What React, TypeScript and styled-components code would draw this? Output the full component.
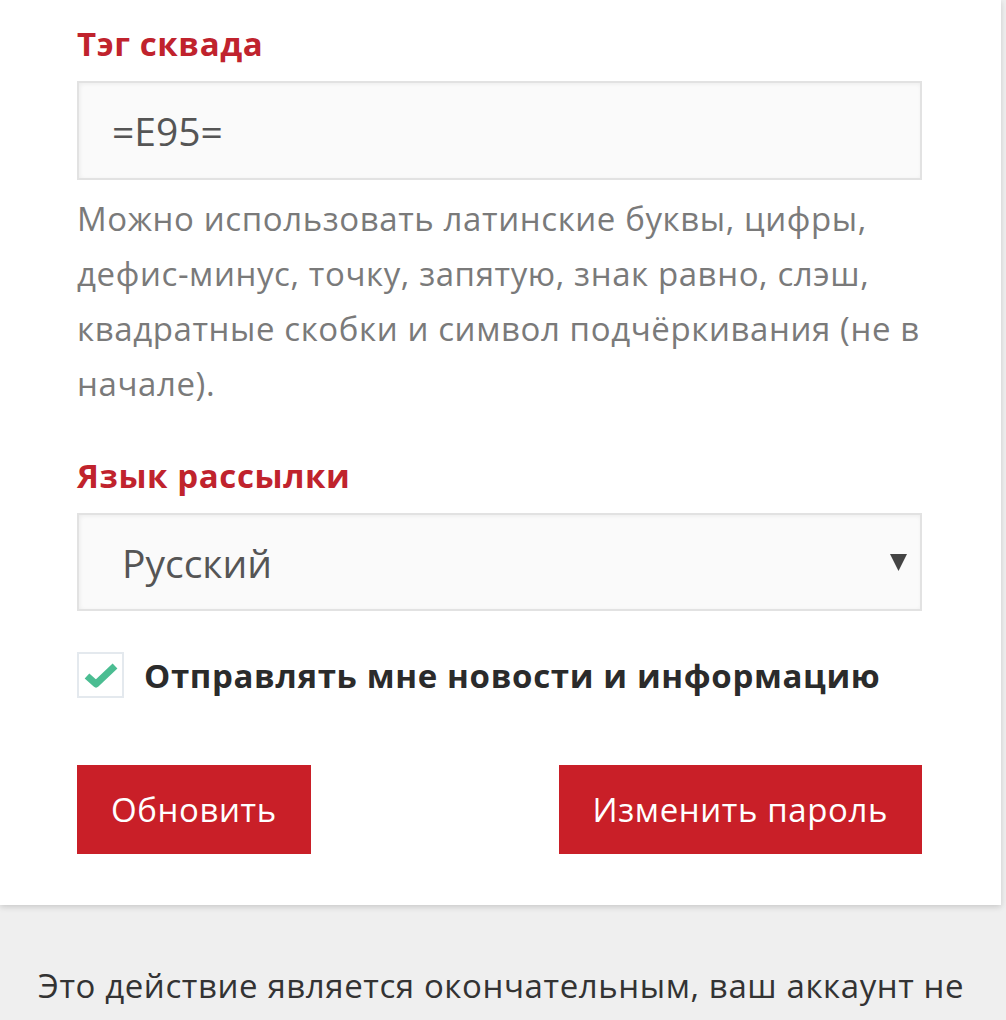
import React from "react";
import styled, { createGlobalStyle } from "styled-components";

const GlobalStyle = createGlobalStyle`
  html, body {
    margin: 0;
    padding: 0;
    background: #efefef;
    font-family: "Open Sans", "Noto Sans", sans-serif;
  }
`;

const Page = styled.div`
  width: 1006px;
  min-height: 1020px;
  background: #efefef;
  overflow: hidden;
`;

const Card = styled.form`
  width: 1001px;
  box-sizing: border-box;
  background: #fff;
  padding: 22px 79px 51px 77px;
  box-shadow: 0 2px 6px rgba(0, 0, 0, 0.16);
  display: flex;
  flex-flow: nowrap column;
`;

const Label = styled.label<{ $top?: number }>`
  display: block;
  margin: ${(p) => p.$top ?? 0}px 0 15px;
  font-size: 33px;
  line-height: 44px;
  letter-spacing: 0.6px;
  font-weight: 700;
  color: #c0232d;
`;

const TextInput = styled.div`
  height: 99px;
  box-sizing: border-box;
  border: 2px solid #e2e2e2;
  background: #fafafa;
  box-shadow: inset 1px 1px 4px rgba(0, 0, 0, 0.06);
  padding: 0 33px;
  display: flex;
  align-items: center;
  font-size: 39px;
  color: #555;
`;

const Hint = styled.p`
  margin: 11px 0 0;
  font-size: 33px;
  line-height: 55px;
  letter-spacing: 0.6px;
  color: #7a7a7a;
`;

const Select = styled(TextInput)`
  height: 98px;
  padding: 0 13px 0 43px;
  justify-content: space-between;

  svg {
    flex-shrink: 0;
  }
`;

const CheckRow = styled.div`
  margin-top: 41px;
  display: flex;
  align-items: center;
  gap: 20px;
`;

const CheckBox = styled.span`
  width: 47px;
  height: 46px;
  box-sizing: border-box;
  border: 2px solid #e4e9ee;
  background: #fff;
  display: flex;
  align-items: center;
  justify-content: center;
`;

const CheckText = styled.span`
  font-size: 33px;
  font-weight: 700;
  color: #2b2b2b;
  letter-spacing: 0.65px;
`;

const Actions = styled.div`
  margin-top: 67px;
  display: flex;
  justify-content: space-between;
`;

const Button = styled.button`
  height: 89px;
  padding: 0 34px;
  border: none;
  border-radius: 0;
  background: #c91f28;
  color: #fff;
  font-family: "Open Sans", "Noto Sans", sans-serif;
  font-size: 33px;
  letter-spacing: 0.6px;
`;

const Notice = styled.p`
  margin: 0;
  padding: 54px 38px 0;
  font-size: 33px;
  line-height: 54px;
  letter-spacing: 0.6px;
  color: #333;
  white-space: nowrap;
`;

const App: React.FC = () => {
  return (
    <Page>
      <GlobalStyle />
      <Card onSubmit={(e) => e.preventDefault()}>
        <Label>Тэг сквада</Label>
        <TextInput>=E95=</TextInput>
        <Hint>
          Можно использовать латинские буквы, цифры, дефис-минус, точку, запятую, знак равно, слэш,
          квадратные скобки и символ подчёркивания (не в начале).
        </Hint>

        <Label $top={43}>Язык рассылки</Label>
        <Select>
          <span>Русский</span>
          <svg width="17" height="17" viewBox="0 0 17 17">
            <polygon points="0,0 17,0 8.5,17" fill="#444" />
          </svg>
        </Select>

        <CheckRow>
          <CheckBox>
            <svg width="36" height="28" viewBox="0 0 36 28">
              <polyline
                points="4,15 13,23 32,5"
                fill="none"
                stroke="#4bbd92"
                strokeWidth="7"
                strokeLinejoin="round"
              />
            </svg>
          </CheckBox>
          <CheckText>Отправлять мне новости и информацию</CheckText>
        </CheckRow>

        <Actions>
          <Button type="submit">Обновить</Button>
          <Button type="button">Изменить пароль</Button>
        </Actions>
      </Card>
      <Notice>Это действие является окончательным, ваш аккаунт не</Notice>
    </Page>
  );
};

export default App;
